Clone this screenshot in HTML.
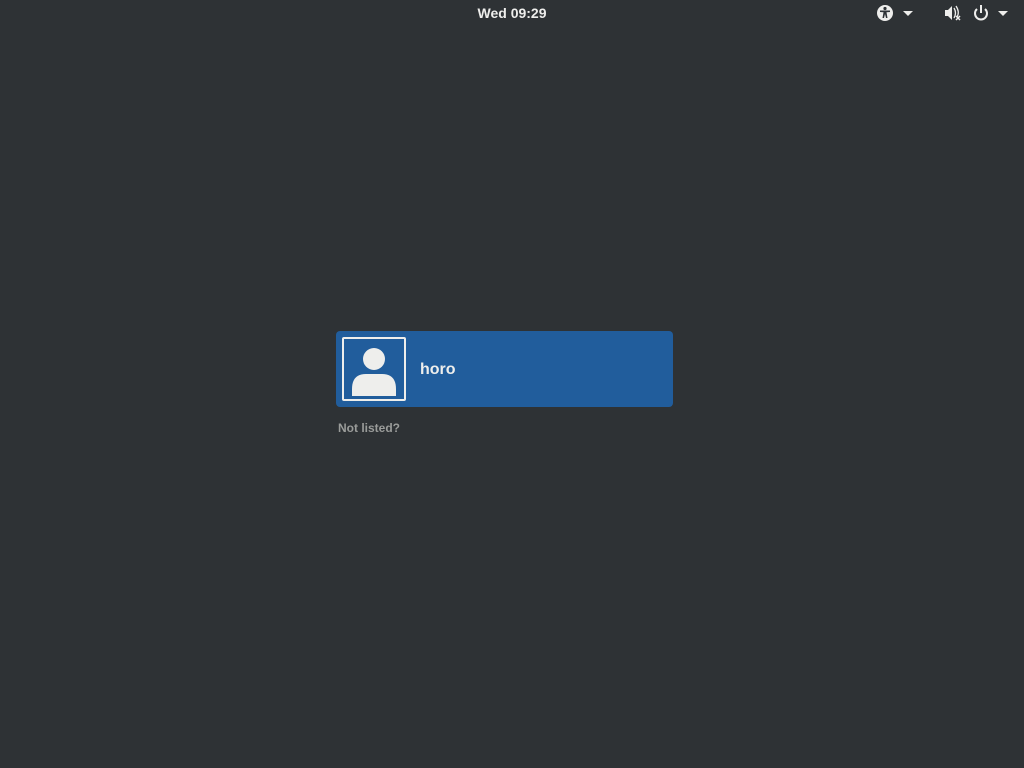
<!DOCTYPE html>
<html><head><style>
html,body{margin:0;padding:0;width:1024px;height:768px;background:#2e3235;overflow:hidden;font-family:"Liberation Sans","DejaVu Sans",sans-serif;}
.clock{position:absolute;top:5px;left:0;width:1024px;text-align:center;color:#eeeeec;font-size:14px;font-weight:bold;}
.card{position:absolute;left:336px;top:331px;width:337px;height:76px;background:#215d9c;border-radius:4px;}
.av{position:absolute;left:6px;top:6px;width:60px;height:60px;border:2px solid #eeeeec;border-radius:2px;}
.name{position:absolute;left:84px;top:30px;color:#eeeeec;font-weight:bold;font-size:16px;}
.nl{position:absolute;left:338px;top:421px;color:#9a9c9a;font-size:12px;font-weight:bold;}
</style></head><body>
<div class="clock">Wed 09:29</div>
<svg style="position:absolute;left:0;top:0" width="1024" height="28">
<circle cx="885" cy="13" r="8" fill="#eeeeec"/>
<circle cx="885" cy="8.5" r="1.6" fill="#2e3236"/>
<path d="M880 10.5 L890 10.5 L890 12 L886.5 12.3 L887.5 18 L886 18 L885 14 L884 18 L882.5 18 L883.5 12.3 L880 12Z" fill="#2e3236"/>
<path d="M903 11 L913 11 L908 16Z" fill="#eeeeec"/>
<path d="M945 10 L948 10 L952 6 L952 20 L948 16 L945 16Z" fill="#eeeeec"/>
<path d="M954 8 Q957 13 954 18 M956 6 Q960 12 957 17" stroke="#eeeeec" stroke-width="1.3" fill="none"/>
<path d="M956 16 L960 20 M960 16 L956 20" stroke="#eeeeec" stroke-width="1.5"/>
<path d="M977 9 A6 6 0 1 0 985 9" stroke="#eeeeec" stroke-width="2" fill="none"/>
<line x1="981" y1="5" x2="981" y2="13" stroke="#eeeeec" stroke-width="2"/>
<path d="M998 11 L1008 11 L1003 16Z" fill="#eeeeec"/>
</svg>
<div class="card"><div class="av">
<svg width="60" height="60"><circle cx="30" cy="20" r="11" fill="#eeeeec"/><path d="M8 57 L8 50 Q8 35 22 35 L38 35 Q52 35 52 50 L52 57Z" fill="#eeeeec"/></svg>
</div><div class="name">horo</div></div>
<div class="nl">Not listed?</div>
</body></html>
